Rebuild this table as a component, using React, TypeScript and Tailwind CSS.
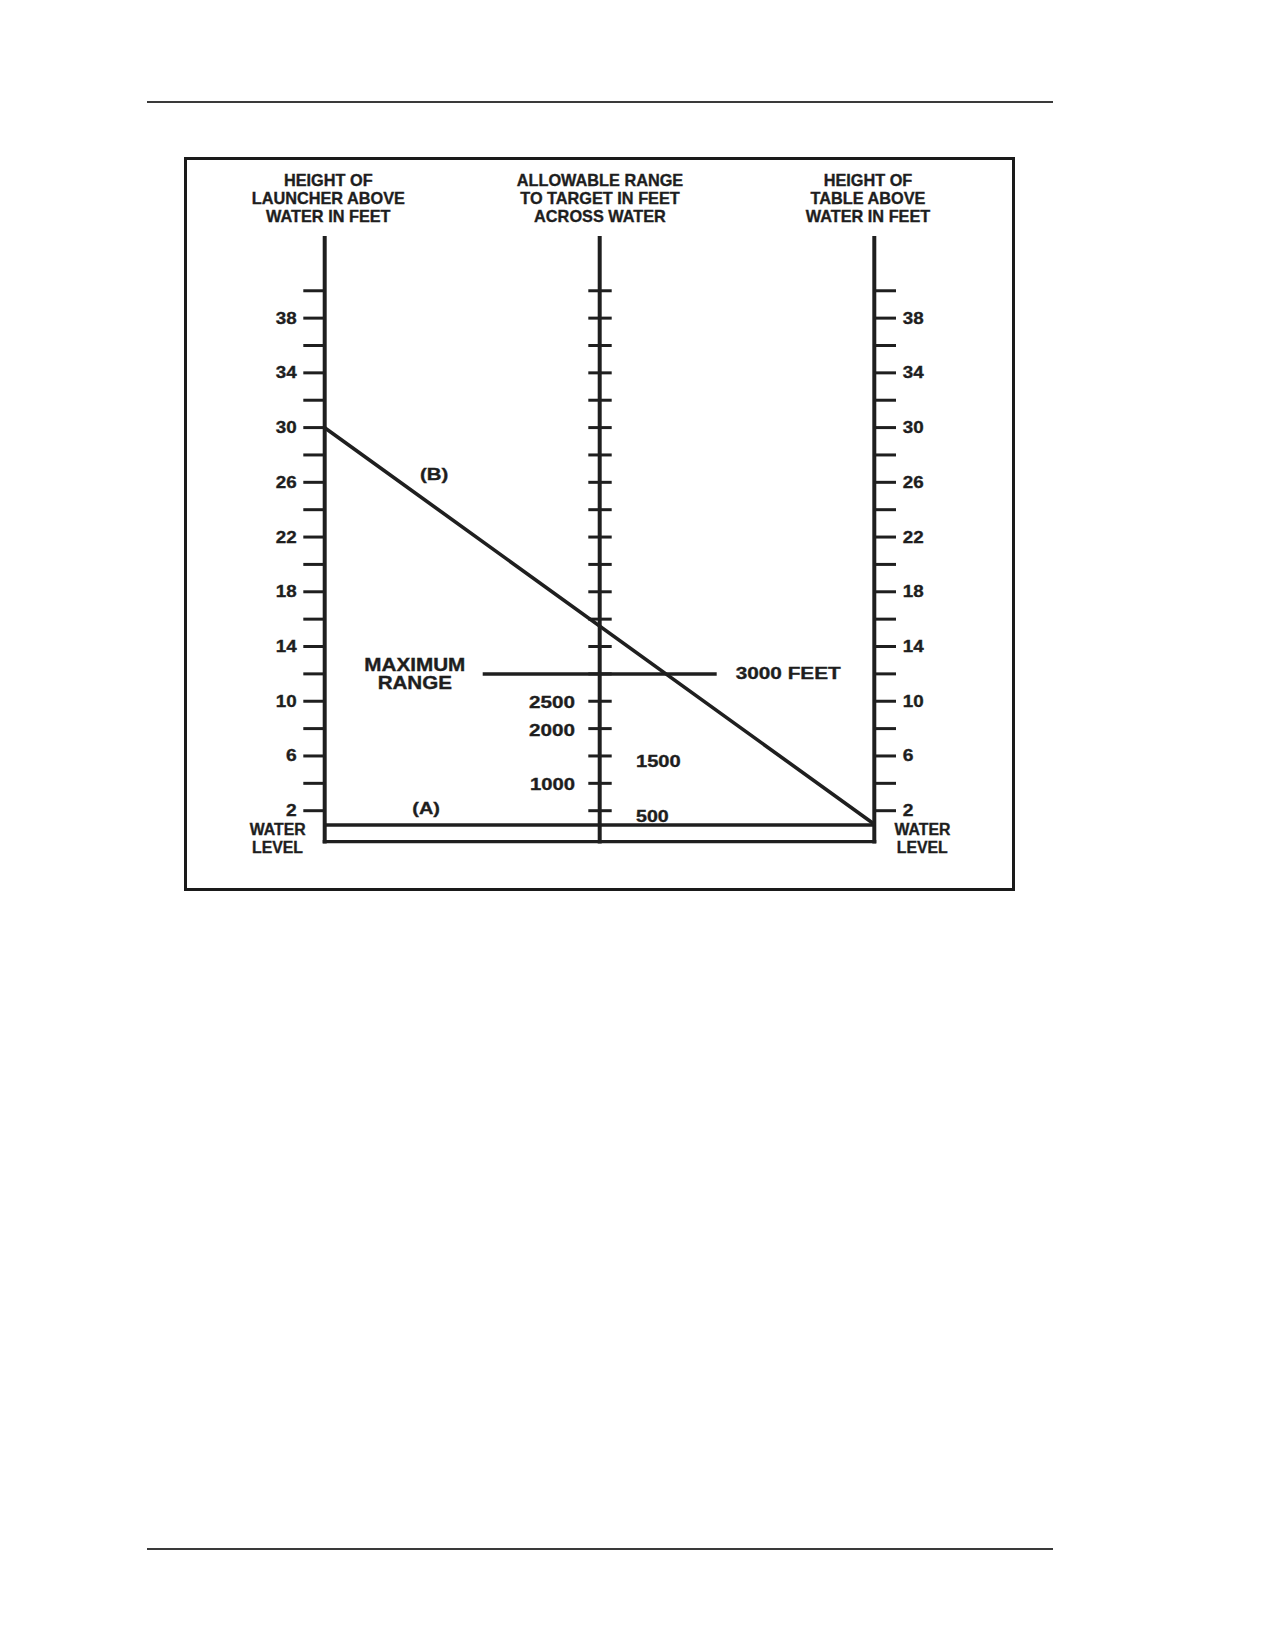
import React from "react";

const INK = "#1f1f1f";
const TXT = "#1e1e1e";

const tickY = (v: number) => 810.7 - ((v - 2) / 2) * 27.365;
const ticks = Array.from({ length: 20 }, (_, i) => 2 + i * 2);
const labeled = [38, 34, 30, 26, 22, 18, 14, 10, 6, 2];

const LEFT_X = 324.7;
const MID_X = 599.7;
const RIGHT_X = 874.3;

type LabelProps = {
  x: number;
  y: number;
  w: number;
  anchor?: "start" | "middle" | "end";
  children: React.ReactNode;
};

function Label({ x, y, w, anchor = "start", children }: LabelProps) {
  return (
    <text x={x} y={y} textAnchor={anchor} textLength={w} lengthAdjust="spacingAndGlyphs">
      {children}
    </text>
  );
}

function Nomograph() {
  const titleSize = 16.3;
  const numSize = 17.2;
  const sw = 0.35;
  return (
    <svg
      width={825}
      height={728}
      viewBox="187 160 825 728"
      fontFamily="'Liberation Sans', Arial, Helvetica, sans-serif"
      fontWeight={700}
    >
      {/* Titles */}
      <g fontSize={titleSize} fill={TXT} stroke={TXT} strokeWidth={sw} textAnchor="middle">
        <text x={328.3} y={185.5}>HEIGHT OF</text>
        <text x={328.3} y={203.8}>LAUNCHER ABOVE</text>
        <text x={328.3} y={222}>WATER IN FEET</text>

        <text x={600} y={185.5}>ALLOWABLE RANGE</text>
        <text x={600} y={203.8}>TO TARGET IN FEET</text>
        <text x={600} y={222}>ACROSS WATER</text>

        <text x={868} y={185.5}>HEIGHT OF</text>
        <text x={868} y={203.8}>TABLE ABOVE</text>
        <text x={868} y={222}>WATER IN FEET</text>
      </g>

      {/* Axes */}
      <g stroke={INK} strokeWidth={4}>
        <line x1={LEFT_X} y1={236} x2={LEFT_X} y2={843.4} />
        <line x1={MID_X} y1={236} x2={MID_X} y2={843.4} />
        <line x1={RIGHT_X} y1={236} x2={RIGHT_X} y2={843.4} />
      </g>

      {/* Ticks */}
      <g stroke={INK} strokeWidth={3}>
        {ticks.map((v) => (
          <React.Fragment key={v}>
            <line x1={303.3} y1={tickY(v)} x2={LEFT_X} y2={tickY(v)} />
            <line x1={588.3} y1={tickY(v)} x2={611.7} y2={tickY(v)} />
            <line x1={RIGHT_X} y1={tickY(v)} x2={896} y2={tickY(v)} />
          </React.Fragment>
        ))}
      </g>

      {/* Water level, bottom line and maximum range */}
      <g stroke={INK} strokeWidth={3.3}>
        <line x1={LEFT_X} y1={825} x2={RIGHT_X} y2={825} />
        <line x1={322.7} y1={841.7} x2={876.3} y2={841.7} />
        <line x1={482.7} y1={674} x2={716.7} y2={674} />
      </g>

      {/* Line (B) */}
      <line
        x1={LEFT_X}
        y1={427.7}
        x2={874}
        y2={824}
        stroke={INK}
        strokeWidth={3.6}
        strokeLinecap="round"
      />

      {/* Scale numbers */}
      <g fontSize={numSize} fill={TXT} stroke={TXT} strokeWidth={sw}>
        {labeled.map((v) => {
          const w = v >= 10 ? 20.9 : 10.7;
          return (
            <React.Fragment key={v}>
              <Label x={296.7} y={tickY(v) + 5.5} w={w} anchor="end">
                {v}
              </Label>
              <Label x={902.7} y={tickY(v) + 5.5} w={w}>
                {v}
              </Label>
            </React.Fragment>
          );
        })}
      </g>

      <g fontSize={numSize} fill={TXT} stroke={TXT} strokeWidth={sw}>
        <Label x={575} y={707.7} w={46} anchor="end">2500</Label>
        <Label x={575} y={735.7} w={46} anchor="end">2000</Label>
        <Label x={575} y={790} w={45} anchor="end">1000</Label>
        <Label x={636} y={767.3} w={44.7}>1500</Label>
        <Label x={636} y={822.3} w={32.7}>500</Label>
        <Label x={735.7} y={679} w={105}>3000 FEET</Label>
        <Label x={412.3} y={814.3} w={27.7}>(A)</Label>
        <Label x={420} y={480} w={28.3}>(B)</Label>
      </g>

      <g fontSize={17.5} fill={TXT} stroke={TXT} strokeWidth={sw}>
        <Label x={414.8} y={671} w={101} anchor="middle">MAXIMUM</Label>
        <Label x={414.8} y={689} w={74.3} anchor="middle">RANGE</Label>
      </g>

      <g fontSize={15.8} fill={TXT} stroke={TXT} strokeWidth={sw} textAnchor="middle">
        <text x={277.7} y={835}>WATER</text>
        <text x={277.5} y={853.3}>LEVEL</text>
        <text x={922.5} y={835}>WATER</text>
        <text x={922.2} y={853.3}>LEVEL</text>
      </g>
    </svg>
  );
}

export default function App() {
  return (
    <div className="w-[1275px] h-[1650px] bg-white pt-[101px]">
      <div className="ml-[147px] w-[906px] h-[2px] bg-[#3a3a3a]" />
      <div className="ml-[184px] mt-[54px] w-[831px] h-[734px] border-[3px] border-[#1a1a1a] bg-white">
        <Nomograph />
      </div>
      <div className="ml-[147px] mt-[657px] w-[906px] h-[2px] bg-[#3a3a3a]" />
    </div>
  );
}
